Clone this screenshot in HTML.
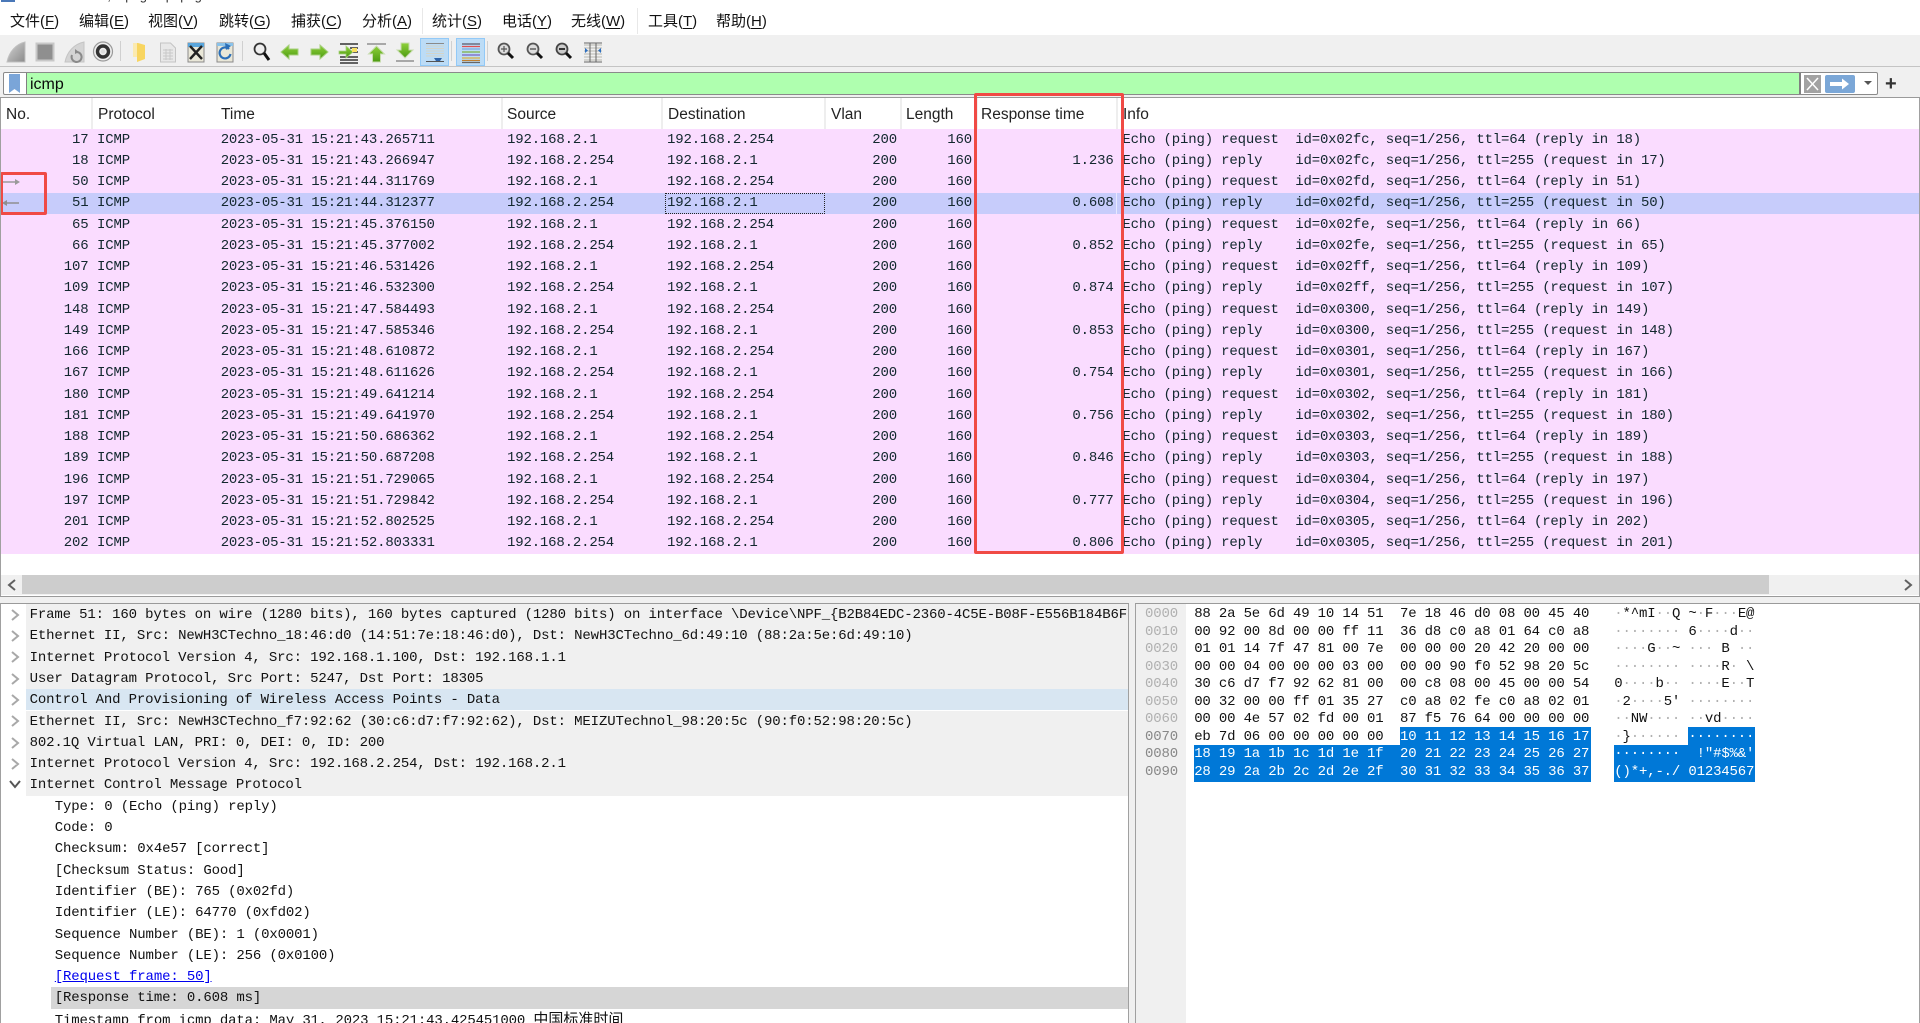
<!DOCTYPE html>
<html><head><meta charset="utf-8"><title>Wireshark</title>
<style>
html,body{margin:0;padding:0;width:1920px;height:1023px;overflow:hidden;background:#f0f0f0}
body{position:relative;font-family:"Liberation Sans","Noto Sans CJK SC",sans-serif}
.abs,.mi,.h,.sep,.hsep{position:absolute}
#menu{position:absolute;left:0;top:0;width:1920px;height:35px;background:#fff;overflow:hidden}
.mi{top:12px;font-size:15px;line-height:20px;color:#111;white-space:pre}
.mi u{text-underline-offset:2px}
.mono{font-family:"Liberation Mono","Noto Sans CJK SC",monospace;font-size:14px;letter-spacing:-.17px}
#tb{position:absolute;left:0;top:35px;width:1920px;height:31px;background:#f0f0f0;border-bottom:1px solid #c4c4c4}
#flt{position:absolute;left:3px;top:72px;width:1875px;height:23px;background:#fff;border:1px solid #8a8a8a;border-radius:2px;box-sizing:border-box}
#green{position:absolute;left:22px;top:0;width:1775px;height:21px;background:#afffaf;border-left:1px solid #808080;border-right:2px solid #808080;font:16px/23px "Liberation Sans",sans-serif;color:#0a0a0a;padding-left:3px;box-sizing:border-box}
#pl{position:absolute;left:0;top:97px;width:1920px;height:500px;background:#fff;border-top:1px solid #9a9a9a;border-bottom:1px solid #9a9a9a;box-sizing:border-box}
#head{position:absolute;left:0;top:98px;width:1920px;height:31px;background:#fff}
.h{top:7px;font-size:15.5px;line-height:20px;color:#222}
.hsep{top:0;width:2px;height:31px;background:#eeeeee}
#rows{position:absolute;left:0;top:129px;width:1920px}
.r{position:relative;height:21.25px;background:#fadcff;color:#12272e;line-height:21px}
.r.sel{background:#c7ccfb}
.r span{position:absolute;top:.6px;white-space:pre}
.n{left:0;width:88.5px;text-align:right}
.p{left:97px}.t{left:220.7px}.s{left:507px}.d{left:667px}
.v{left:0;width:897px;text-align:right}
.l{left:0;width:972px;text-align:right}
.m{left:0;width:1113.6px;text-align:right}
.i{left:1122.4px}
#det{position:absolute;left:0;top:603px;width:1129px;height:420px;background:#fff;border-top:1px solid #9a9a9a;border-left:1px solid #a0a0a0;border-right:1px solid #a0a0a0;box-sizing:border-box;overflow:hidden;letter-spacing:-.15px}
.dr{position:absolute;left:0;height:21.3px;width:1127px;line-height:21px;color:#111;overflow:hidden}
.dr .tx{position:absolute;top:1px;white-space:pre}
.par .bg{position:absolute;left:25px;right:0;top:0;bottom:0;background:#f0f0f0}
.par .tx{left:28.6px}
.ch .tx{left:53.8px}
#hex{position:absolute;left:1135px;top:603px;width:785px;height:420px;background:#fff;border-top:1px solid #9a9a9a;border-left:1px solid #a0a0a0;border-right:1px solid #a0a0a0;box-sizing:border-box;overflow:hidden}
#gut{position:absolute;left:0;top:0;width:50px;height:420px;background:#f0f0f0}
.hl{position:absolute;white-space:pre;line-height:17.55px;color:#111}
.g{color:#b0b0b0}
.sb{position:absolute;background:#0078d7}
.w{color:#fff}
.w .g{color:#fff}
.red{position:absolute;border:3px solid #f04a45;box-sizing:border-box;border-radius:2px}
</style></head>
<body>
<div id="menu">
<svg class="abs" style="left:0;top:0" width="16" height="3"><rect x="1" y="0" width="14" height="2" fill="#4a78b8"/></svg>
<div class="abs" style="left:100px;top:-11px;font-size:13px;line-height:14px;color:#333;white-space:pre">  ,    p  g  -  p  p  g</div>
<div class="mi" style="left:10px">文件(<u>F</u>)</div>
<div class="mi" style="left:79px">编辑(<u>E</u>)</div>
<div class="mi" style="left:148px">视图(<u>V</u>)</div>
<div class="mi" style="left:219px">跳转(<u>G</u>)</div>
<div class="mi" style="left:291px">捕获(<u>C</u>)</div>
<div class="mi" style="left:362px">分析(<u>A</u>)</div>
<div class="mi" style="left:432px">统计(<u>S</u>)</div>
<div class="mi" style="left:502px">电话(<u>Y</u>)</div>
<div class="mi" style="left:571px">无线(<u>W</u>)</div>
<div class="mi" style="left:648px">工具(<u>T</u>)</div>
<div class="mi" style="left:716px">帮助(<u>H</u>)</div>
<div class="abs" style="left:422px;top:8px;width:1px;height:26px;background:#e8e8e8"></div>
<div class="abs" style="left:637px;top:8px;width:1px;height:26px;background:#e8e8e8"></div>
</div>

<div id="tb"></div>
<svg class="abs" style="left:0;top:35px" width="640" height="31" viewBox="0 35 640 31">
<defs>
<linearGradient id="gf" x1="0" y1="0" x2="1" y2="1"><stop offset="0" stop-color="#d4d4d4"/><stop offset="1" stop-color="#8a8a8a"/></linearGradient>
<linearGradient id="gg" x1="0" y1="0" x2="0" y2="1"><stop offset="0" stop-color="#8fd13a"/><stop offset="1" stop-color="#4c9a10"/></linearGradient>
</defs>
<!-- fin -->
<path d="M7 62C9 52 16 44 25 42V62Z" fill="url(#gf)" stroke="#c0c0c0"/>
<!-- stop -->
<rect x="36.500" y="43.500" width="17" height="17" fill="#8f8f8f" stroke="#c8c8c8" stroke-width="2"/>
<!-- restart -->
<path d="M65 62C67 52 74 44 84 42V62Z" fill="#d4d4d4" stroke="#c4c4c4"/>
<path d="M72 55a5 5 0 1 0 5-3" fill="none" stroke="#8a8a8a" stroke-width="2"/>
<path d="M75 49l4 3-4 2z" fill="#8a8a8a"/>
<!-- gear -->
<circle cx="103" cy="51.500" r="9.500" fill="#eeeeee" stroke="#9a9a9a" stroke-width="1.200"/>
<circle cx="103" cy="51.500" r="5.500" fill="none" stroke="#333" stroke-width="3.400"/>
<circle cx="103" cy="51.500" r="2.200" fill="#dddddd"/>
<rect x="120" y="41" width="1" height="20" fill="#d0d0d0"/>
<!-- folder -->
<path d="M133 43h5l7 2v14l-8 3v-5h-4z" fill="#f8d560"/>
<path d="M133 43h4v14h-4z" fill="#fbeab0"/>
<!-- doc -->
<path d="M160.500 43h10l5 5v14h-15z" fill="#e8e8e8" stroke="#c4c4c4"/>
<g stroke="#c8c8c8"><path d="M163 50h10M163 53h10M163 56h10M163 59h10M166 49v11M170 49v11"/></g>
<!-- close -->
<path d="M188 43h16v19h-16z" fill="#e9e7d8" stroke="#8a8a8a"/>
<rect x="188" y="43" width="16" height="4" fill="#5aa6dc"/>
<path d="M190 46l12 13M202 46l-12 13" stroke="#222" stroke-width="2.400"/>
<!-- reload -->
<path d="M217 43h16v19h-16z" fill="#e9e7d8" stroke="#8a8a8a"/>
<rect x="217" y="43" width="16" height="3" fill="#8ac2ea"/>
<path d="M229 49a5.500 5.500 0 1 0 1.500 5" fill="none" stroke="#2c6fb8" stroke-width="2.200"/>
<path d="M225 43l6 3-5 4z" fill="#2c6fb8"/>
<rect x="242" y="41" width="1" height="20" fill="#d0d0d0"/>
<!-- find -->
<circle cx="260" cy="49" r="5.500" fill="#eee" stroke="#333" stroke-width="1.800"/>
<path d="M264 53l5 7" stroke="#111" stroke-width="3"/>
<!-- arrows -->
<path d="M281 52l8-7v4h9v6h-9v4z" fill="url(#gg)" stroke="#a8d080" stroke-width="1"/>
<path d="M328 52l-8-7v4h-9v6h9v4z" fill="url(#gg)" stroke="#a8d080" stroke-width="1"/>
<!-- goto -->
<g stroke="#333" stroke-width="1.400"><path d="M340 44h18M350 48h8M350 52h8M340 57h18M340 60h18M340 63h18"/></g>
<path d="M339 51h7v-5l7 6-7 6v-4h-7z" fill="url(#gg)" stroke="#a8d080" stroke-width=".8"/>
<rect x="352" y="48" width="5" height="4" fill="#f8e060"/>
<!-- top -->
<rect x="367" y="43" width="19" height="2" fill="#a8a8a8"/>
<path d="M376.500 46l8 8h-4v8h-8v-8h-4z" fill="url(#gg)" stroke="#c8dcb0"/>
<!-- bottom -->
<rect x="396" y="60" width="18" height="2" fill="#a8a8a8"/>
<path d="M405 58l-8-8h4v-7h8v7h4z" fill="url(#gg)" stroke="#c8dcb0"/>
<!-- autoscroll -->
<rect x="420.500" y="38.500" width="28" height="27" fill="#bcdcf6" stroke="#92c9f7"/>
<g stroke="#8a8a8a"><path d="M426 43.500h18"/></g><g stroke="#d4d4c8"><path d="M426 46h18M426 48.500h18M426 51h18M426 53.500h18M426 56h18"/></g>
<path d="M426 61.500h18" stroke="#555"/>
<path d="M434 58h8l-2 3h-4z" fill="#2d63a8"/>
<rect x="451" y="41" width="1" height="20" fill="#d0d0d0"/>
<!-- colorize -->
<rect x="456.500" y="38.500" width="28" height="27" fill="#bcdcf6" stroke="#92c9f7"/>
<g stroke-width="1.200"><path d="M462 44h18" stroke="#5a5a6a"/><path d="M462 46.500h18" stroke="#e05050"/><path d="M462 49h18" stroke="#7aa8e0"/><path d="M462 52h18" stroke="#80b040"/><path d="M462 55h18" stroke="#7a60c0"/><path d="M462 58h18" stroke="#d8b040"/><path d="M462 60.500h18" stroke="#c08030"/><path d="M462 62.500h18" stroke="#666"/></g>
<rect x="487" y="41" width="1" height="20" fill="#d0d0d0"/>
<!-- zooms -->
<g>
<circle cx="504" cy="49" r="5.500" fill="#ddd" stroke="#555" stroke-width="1.800"/><path d="M508 53l5 5" stroke="#111" stroke-width="3"/><path d="M501 49h6M504 46v6" stroke="#555" stroke-width="1.200"/>
<circle cx="533" cy="49" r="5.500" fill="#ddd" stroke="#555" stroke-width="1.800"/><path d="M537 53l5 5" stroke="#111" stroke-width="3"/><path d="M530 49h6" stroke="#555" stroke-width="1.400"/>
<circle cx="562" cy="49" r="5.500" fill="#ccc" stroke="#444" stroke-width="1.800"/><path d="M566 53l5 5" stroke="#111" stroke-width="3"/><path d="M559 49h6" stroke="#333" stroke-width="2"/>
</g>
<!-- resize -->
<g stroke="#b8b8b0"><path d="M584 45h18M584 48h18M584 51h18M584 54h18M584 57h18M584 60h18"/></g>
<path d="M584 43h18M584 62h18M590 43v19M596 43v19" stroke="#666" fill="none"/>
<path d="M585 48l3 2.500-3 2.500zM601 48l-3 2.500 3 2.500z" fill="#2d6fc0"/>
</svg>

<div id="flt">
<div class="abs" style="left:5px;top:1px;width:11px;height:19px;background:#7aa5d8"></div>
<svg class="abs" style="left:5px;top:14px" width="11" height="6"><path d="M0 6L5.500 2 11 6z" fill="#fff"/></svg>
<div id="green">icmp</div>
<svg class="abs" style="left:1800px;top:2px" width="52" height="18">
<rect x="0" y="0" width="17" height="18" fill="#a2a2a2"/><path d="M3 3l11 12M14 3L3 15" stroke="#fff" stroke-width="1.500"/>
<rect x="21" y="0" width="30" height="18" rx="2" fill="#7ba7d7"/><path d="M26 7h12V3.500l7 5.500-7 5.500V11H26z" fill="#fff"/>
</svg>
<svg class="abs" style="left:1859px;top:8px" width="10" height="6"><path d="M1 0h8L5 4z" fill="#555"/></svg>
</div>
<div class="abs" style="left:1885px;top:73px;font:bold 20px/22px 'Liberation Sans',sans-serif;color:#333">+</div>

<div id="pl"></div>
<div class="abs" style="left:0;top:98px;width:1px;height:498px;background:#a0a0a0;z-index:3"></div>
<div class="abs" style="left:1919px;top:98px;width:1px;height:498px;background:#a0a0a0;z-index:3"></div>
<div id="head">
<div class="h" style="left:6px">No.</div><div class="hsep" style="left:91px"></div>
<div class="h" style="left:98px">Protocol</div>
<div class="h" style="left:221px">Time</div><div class="hsep" style="left:501px"></div>
<div class="h" style="left:507px">Source</div><div class="hsep" style="left:661px"></div>
<div class="h" style="left:668px">Destination</div><div class="hsep" style="left:824px"></div>
<div class="h" style="left:831px">Vlan</div><div class="hsep" style="left:900px"></div>
<div class="h" style="left:906px">Length</div><div class="hsep" style="left:976px"></div>
<div class="h" style="left:981px">Response time</div><div class="hsep" style="left:1116px"></div>
<div class="h" style="left:1123px">Info</div>
</div>

<div id="rows" class="mono">
<div class="r"><span class="n">17</span><span class="p">ICMP</span><span class="t">2023-05-31 15:21:43.265711</span><span class="s">192.168.2.1</span><span class="d">192.168.2.254</span><span class="v">200</span><span class="l">160</span><span class="i">Echo (ping) request  id=0x02fc, seq=1/256, ttl=64 (reply in 18)</span></div>
<div class="r"><span class="n">18</span><span class="p">ICMP</span><span class="t">2023-05-31 15:21:43.266947</span><span class="s">192.168.2.254</span><span class="d">192.168.2.1</span><span class="v">200</span><span class="l">160</span><span class="m">1.236</span><span class="i">Echo (ping) reply    id=0x02fc, seq=1/256, ttl=255 (request in 17)</span></div>
<div class="r"><span class="n">50</span><span class="p">ICMP</span><span class="t">2023-05-31 15:21:44.311769</span><span class="s">192.168.2.1</span><span class="d">192.168.2.254</span><span class="v">200</span><span class="l">160</span><span class="i">Echo (ping) request  id=0x02fd, seq=1/256, ttl=64 (reply in 51)</span></div>
<div class="r sel"><span class="n">51</span><span class="p">ICMP</span><span class="t">2023-05-31 15:21:44.312377</span><span class="s">192.168.2.254</span><span class="d">192.168.2.1</span><span class="v">200</span><span class="l">160</span><span class="m">0.608</span><span class="i">Echo (ping) reply    id=0x02fd, seq=1/256, ttl=255 (request in 50)</span></div>
<div class="r"><span class="n">65</span><span class="p">ICMP</span><span class="t">2023-05-31 15:21:45.376150</span><span class="s">192.168.2.1</span><span class="d">192.168.2.254</span><span class="v">200</span><span class="l">160</span><span class="i">Echo (ping) request  id=0x02fe, seq=1/256, ttl=64 (reply in 66)</span></div>
<div class="r"><span class="n">66</span><span class="p">ICMP</span><span class="t">2023-05-31 15:21:45.377002</span><span class="s">192.168.2.254</span><span class="d">192.168.2.1</span><span class="v">200</span><span class="l">160</span><span class="m">0.852</span><span class="i">Echo (ping) reply    id=0x02fe, seq=1/256, ttl=255 (request in 65)</span></div>
<div class="r"><span class="n">107</span><span class="p">ICMP</span><span class="t">2023-05-31 15:21:46.531426</span><span class="s">192.168.2.1</span><span class="d">192.168.2.254</span><span class="v">200</span><span class="l">160</span><span class="i">Echo (ping) request  id=0x02ff, seq=1/256, ttl=64 (reply in 109)</span></div>
<div class="r"><span class="n">109</span><span class="p">ICMP</span><span class="t">2023-05-31 15:21:46.532300</span><span class="s">192.168.2.254</span><span class="d">192.168.2.1</span><span class="v">200</span><span class="l">160</span><span class="m">0.874</span><span class="i">Echo (ping) reply    id=0x02ff, seq=1/256, ttl=255 (request in 107)</span></div>
<div class="r"><span class="n">148</span><span class="p">ICMP</span><span class="t">2023-05-31 15:21:47.584493</span><span class="s">192.168.2.1</span><span class="d">192.168.2.254</span><span class="v">200</span><span class="l">160</span><span class="i">Echo (ping) request  id=0x0300, seq=1/256, ttl=64 (reply in 149)</span></div>
<div class="r"><span class="n">149</span><span class="p">ICMP</span><span class="t">2023-05-31 15:21:47.585346</span><span class="s">192.168.2.254</span><span class="d">192.168.2.1</span><span class="v">200</span><span class="l">160</span><span class="m">0.853</span><span class="i">Echo (ping) reply    id=0x0300, seq=1/256, ttl=255 (request in 148)</span></div>
<div class="r"><span class="n">166</span><span class="p">ICMP</span><span class="t">2023-05-31 15:21:48.610872</span><span class="s">192.168.2.1</span><span class="d">192.168.2.254</span><span class="v">200</span><span class="l">160</span><span class="i">Echo (ping) request  id=0x0301, seq=1/256, ttl=64 (reply in 167)</span></div>
<div class="r"><span class="n">167</span><span class="p">ICMP</span><span class="t">2023-05-31 15:21:48.611626</span><span class="s">192.168.2.254</span><span class="d">192.168.2.1</span><span class="v">200</span><span class="l">160</span><span class="m">0.754</span><span class="i">Echo (ping) reply    id=0x0301, seq=1/256, ttl=255 (request in 166)</span></div>
<div class="r"><span class="n">180</span><span class="p">ICMP</span><span class="t">2023-05-31 15:21:49.641214</span><span class="s">192.168.2.1</span><span class="d">192.168.2.254</span><span class="v">200</span><span class="l">160</span><span class="i">Echo (ping) request  id=0x0302, seq=1/256, ttl=64 (reply in 181)</span></div>
<div class="r"><span class="n">181</span><span class="p">ICMP</span><span class="t">2023-05-31 15:21:49.641970</span><span class="s">192.168.2.254</span><span class="d">192.168.2.1</span><span class="v">200</span><span class="l">160</span><span class="m">0.756</span><span class="i">Echo (ping) reply    id=0x0302, seq=1/256, ttl=255 (request in 180)</span></div>
<div class="r"><span class="n">188</span><span class="p">ICMP</span><span class="t">2023-05-31 15:21:50.686362</span><span class="s">192.168.2.1</span><span class="d">192.168.2.254</span><span class="v">200</span><span class="l">160</span><span class="i">Echo (ping) request  id=0x0303, seq=1/256, ttl=64 (reply in 189)</span></div>
<div class="r"><span class="n">189</span><span class="p">ICMP</span><span class="t">2023-05-31 15:21:50.687208</span><span class="s">192.168.2.254</span><span class="d">192.168.2.1</span><span class="v">200</span><span class="l">160</span><span class="m">0.846</span><span class="i">Echo (ping) reply    id=0x0303, seq=1/256, ttl=255 (request in 188)</span></div>
<div class="r"><span class="n">196</span><span class="p">ICMP</span><span class="t">2023-05-31 15:21:51.729065</span><span class="s">192.168.2.1</span><span class="d">192.168.2.254</span><span class="v">200</span><span class="l">160</span><span class="i">Echo (ping) request  id=0x0304, seq=1/256, ttl=64 (reply in 197)</span></div>
<div class="r"><span class="n">197</span><span class="p">ICMP</span><span class="t">2023-05-31 15:21:51.729842</span><span class="s">192.168.2.254</span><span class="d">192.168.2.1</span><span class="v">200</span><span class="l">160</span><span class="m">0.777</span><span class="i">Echo (ping) reply    id=0x0304, seq=1/256, ttl=255 (request in 196)</span></div>
<div class="r"><span class="n">201</span><span class="p">ICMP</span><span class="t">2023-05-31 15:21:52.802525</span><span class="s">192.168.2.1</span><span class="d">192.168.2.254</span><span class="v">200</span><span class="l">160</span><span class="i">Echo (ping) request  id=0x0305, seq=1/256, ttl=64 (reply in 202)</span></div>
<div class="r"><span class="n">202</span><span class="p">ICMP</span><span class="t">2023-05-31 15:21:52.803331</span><span class="s">192.168.2.254</span><span class="d">192.168.2.1</span><span class="v">200</span><span class="l">160</span><span class="m">0.806</span><span class="i">Echo (ping) reply    id=0x0305, seq=1/256, ttl=255 (request in 201)</span></div>
</div>
<div class="abs" style="left:665px;top:193px;width:160px;height:21px;box-sizing:border-box;border:1px dotted #222"></div>
<div class="abs" style="left:1116px;top:193px;width:1px;height:21px;background:#e6e8ff"></div>
<svg class="abs" style="left:0;top:172px" width="30" height="42">
<path d="M3 10h14" stroke="#9a9a9a" stroke-width="1.500"/><path d="M15 7l5 3-5 3z" fill="#9a9a9a"/>
<path d="M19 31H5" stroke="#8f8f8f" stroke-width="1.500"/><path d="M7 28l-5 3 5 3z" fill="#8f8f8f"/>
</svg>

<div class="abs" style="left:1px;top:575px;width:1918px;height:20px;background:#f0f0f0"></div>
<div class="abs" style="left:22px;top:575px;width:1747px;height:19px;background:#cdcdcd"></div>
<svg class="abs" style="left:6px;top:578px" width="12" height="14"><path d="M9 2L3 7l6 5" fill="none" stroke="#606060" stroke-width="2"/></svg>
<svg class="abs" style="left:1902px;top:578px" width="12" height="14"><path d="M3 2l6 5-6 5" fill="none" stroke="#606060" stroke-width="2"/></svg>

<div id="det" class="mono" style="letter-spacing:-.15px">
<div class="dr par" style="top:0"><div class="bg"></div><div class="tx">Frame 51: 160 bytes on wire (1280 bits), 160 bytes captured (1280 bits) on interface \Device\NPF_{B2B84EDC-2360-4C5E-B08F-E556B184B6F5}, id 0</div></div>
<div class="dr par" style="top:21.300px"><div class="bg"></div><div class="tx">Ethernet II, Src: NewH3CTechno_18:46:d0 (14:51:7e:18:46:d0), Dst: NewH3CTechno_6d:49:10 (88:2a:5e:6d:49:10)</div></div>
<div class="dr par" style="top:42.600px"><div class="bg"></div><div class="tx">Internet Protocol Version 4, Src: 192.168.1.100, Dst: 192.168.1.1</div></div>
<div class="dr par" style="top:63.900px"><div class="bg"></div><div class="tx">User Datagram Protocol, Src Port: 5247, Dst Port: 18305</div></div>
<div class="dr par" style="top:85.200px"><div class="bg" style="background:#d8e6f2"></div><div class="tx">Control And Provisioning of Wireless Access Points - Data</div></div>
<div class="dr par" style="top:106.500px"><div class="bg"></div><div class="tx">Ethernet II, Src: NewH3CTechno_f7:92:62 (30:c6:d7:f7:92:62), Dst: MEIZUTechnol_98:20:5c (90:f0:52:98:20:5c)</div></div>
<div class="dr par" style="top:127.800px"><div class="bg"></div><div class="tx">802.1Q Virtual LAN, PRI: 0, DEI: 0, ID: 200</div></div>
<div class="dr par" style="top:149.100px"><div class="bg"></div><div class="tx">Internet Protocol Version 4, Src: 192.168.2.254, Dst: 192.168.2.1</div></div>
<div class="dr par" style="top:170.400px"><div class="bg"></div><div class="tx">Internet Control Message Protocol</div></div>
<div class="dr ch" style="top:191.700px"><div class="tx">Type: 0 (Echo (ping) reply)</div></div>
<div class="dr ch" style="top:213px"><div class="tx">Code: 0</div></div>
<div class="dr ch" style="top:234.300px"><div class="tx">Checksum: 0x4e57 [correct]</div></div>
<div class="dr ch" style="top:255.600px"><div class="tx">[Checksum Status: Good]</div></div>
<div class="dr ch" style="top:276.900px"><div class="tx">Identifier (BE): 765 (0x02fd)</div></div>
<div class="dr ch" style="top:298.200px"><div class="tx">Identifier (LE): 64770 (0xfd02)</div></div>
<div class="dr ch" style="top:319.500px"><div class="tx">Sequence Number (BE): 1 (0x0001)</div></div>
<div class="dr ch" style="top:340.800px"><div class="tx">Sequence Number (LE): 256 (0x0100)</div></div>
<div class="dr ch" style="top:362.100px"><div class="tx" style="color:#0000ee;text-decoration:underline">[Request frame: 50]</div></div>
<div class="dr ch" style="top:383.400px"><div class="abs" style="left:50px;right:0;top:0;bottom:0;background:#d6d6d6"></div><div class="tx">[Response time: 0.608 ms]</div></div>
<div class="dr ch" style="top:404.700px"><div class="tx">Timestamp from icmp data: May 31, 2023 15:21:43.425451000 <span style="font-size:15px;letter-spacing:0">中国标准时间</span></div></div>
<svg class="abs" style="left:8px;top:0" width="14" height="192" fill="none" stroke="#a8a8a8" stroke-width="2">
<path d="M3 6l6 5-6 5M3 27l6 5-6 5M3 48l6 5-6 5M3 70l6 5-6 5M3 91l6 5-6 5M3 112l6 5-6 5M3 134l6 5-6 5M3 155l6 5-6 5"/>
<path d="M1 177l5 6 5-6" stroke="#555"/>
</svg>
</div>

<div id="hex" class="mono">
<div id="gut"></div>
<div class="sb" style="left:264px;top:123px;width:191px;height:18px"></div>
<div class="sb" style="left:552px;top:123px;width:67px;height:18px"></div>
<div class="sb" style="left:58px;top:141px;width:397px;height:37px"></div>
<div class="sb" style="left:478px;top:141px;width:141px;height:37px"></div>
<div class="hl g" style="left:9px;top:2px">0000
0010
0020
0030
0040
0050
0060
<span style="color:#888">0070
0080
0090</span></div>
<div class="hl" style="left:58.200px;top:2px">88 2a 5e 6d 49 10 14 51  7e 18 46 d0 08 00 45 40
00 92 00 8d 00 00 ff 11  36 d8 c0 a8 01 64 c0 a8
01 01 14 7f 47 81 00 7e  00 00 00 20 42 20 00 00
00 00 04 00 00 00 03 00  00 00 90 f0 52 98 20 5c
30 c6 d7 f7 92 62 81 00  00 c8 08 00 45 00 00 54
00 32 00 00 ff 01 35 27  c0 a8 02 fe c0 a8 02 01
00 00 4e 57 02 fd 00 01  87 f5 76 64 00 00 00 00
eb 7d 06 00 00 00 00 00  <span class="w">10 11 12 13 14 15 16 17</span>
<span class="w">18 19 1a 1b 1c 1d 1e 1f  20 21 22 23 24 25 26 27
28 29 2a 2b 2c 2d 2e 2f  30 31 32 33 34 35 36 37</span></div>
<div class="hl" style="left:478.300px;top:2px"><span class="g">·</span>*^mI<span class="g">··</span>Q ~<span class="g">·</span>F<span class="g">···</span>E@
<span class="g">········</span> 6<span class="g">····</span>d<span class="g">··</span>
<span class="g">····</span>G<span class="g">··</span>~ <span class="g">···</span> B <span class="g">··</span>
<span class="g">········</span> <span class="g">····</span>R<span class="g">·</span> \
0<span class="g">····</span>b<span class="g">··</span> <span class="g">····</span>E<span class="g">··</span>T
<span class="g">·</span>2<span class="g">····</span>5' <span class="g">········</span>
<span class="g">··</span>NW<span class="g">····</span> <span class="g">··</span>vd<span class="g">····</span>
<span class="g">·</span>}<span class="g">······</span> <span class="w"><span class="g">········</span></span>
<span class="w"><span class="g">········</span>  !"#$%&amp;'
()*+,-./ 01234567</span></div>
</div>

<div class="red" style="left:974px;top:93px;width:150px;height:461px"></div>
<div class="red" style="left:0;top:172px;width:47px;height:43px"></div>
</body></html>
